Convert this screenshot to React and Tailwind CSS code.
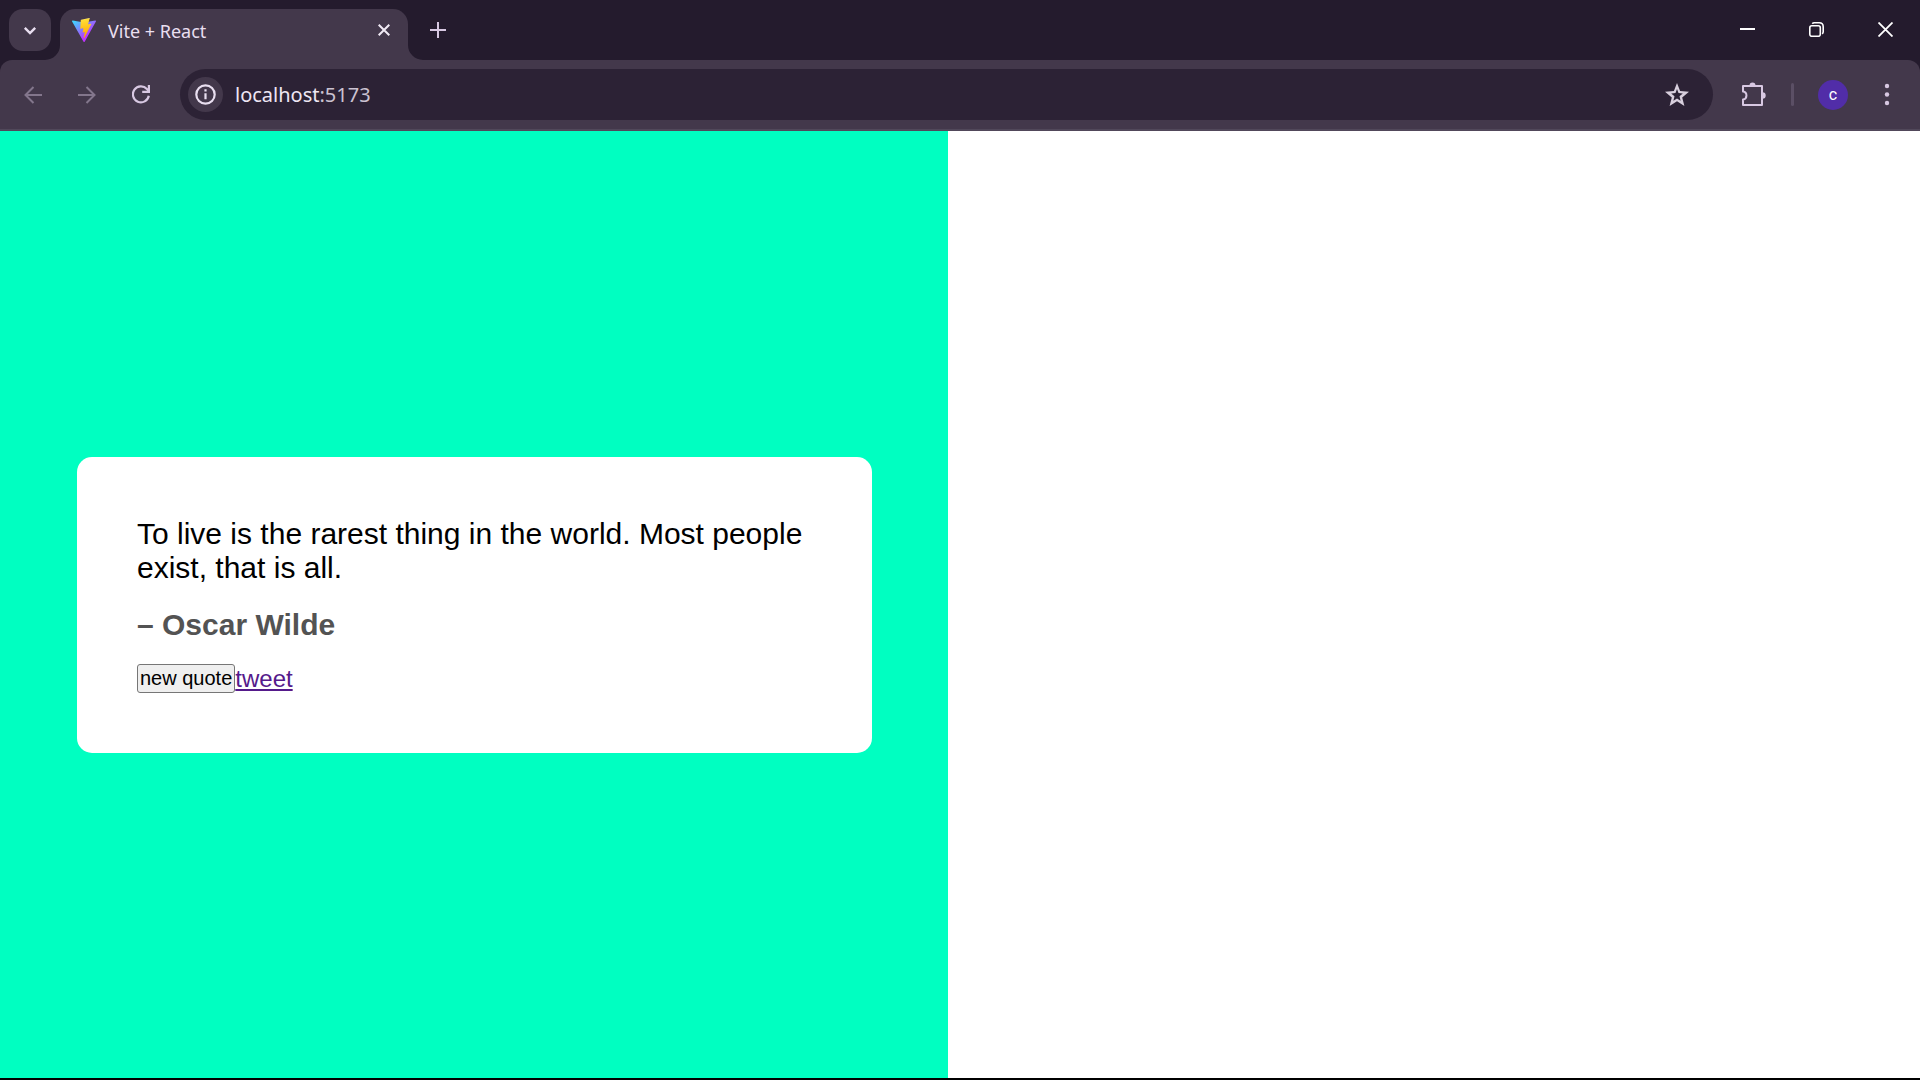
import React from "react";

function IconButton({ label, className = "", children }) {
  return (
    <button type="button" aria-label={label} className={`flex shrink-0 items-center justify-center ${className}`}>
      {children}
    </button>
  );
}

function ViteLogo() {
  return (
    <svg width="24" height="24" viewBox="0 0 32 32" aria-hidden="true" className="shrink-0">
      <defs>
        <linearGradient id="vite-body" x1="0%" x2="57.6%" y1="12%" y2="78%">
          <stop offset="0%" stopColor="#41D1FF" />
          <stop offset="100%" stopColor="#BD34FE" />
        </linearGradient>
        <linearGradient id="vite-bolt" x1="43%" x2="50%" y1="2%" y2="89%">
          <stop offset="0%" stopColor="#FFEA83" />
          <stop offset="8%" stopColor="#FFDD35" />
          <stop offset="100%" stopColor="#FFA800" />
        </linearGradient>
      </defs>
      <path fill="url(#vite-body)" d="M31.86 4.74 16.9 31.5a.86.86 0 0 1-1.5 0L.13 4.74a.86.86 0 0 1 .9-1.27L16 6.15l14.96-2.68a.86.86 0 0 1 .9 1.27Z" />
      <path fill="url(#vite-bolt)" d="M23.13.01 12.06 2.18a.4.4 0 0 0-.33.38l-.68 11.5a.4.4 0 0 0 .5.42l3.08-.71a.4.4 0 0 1 .49.48l-.92 4.49a.4.4 0 0 0 .52.47l1.9-.58a.4.4 0 0 1 .52.47l-1.46 7.04c-.09.44.5.68.74.3l.16-.25 9.03-18.02a.4.4 0 0 0-.44-.58l-3.17.61a.4.4 0 0 1-.46-.51L23.6.5a.4.4 0 0 0-.47-.49Z" />
    </svg>
  );
}

function TabStrip() {
  return (
    <div className="flex h-[60px] items-start text-white">
      <IconButton label="Search tabs" className="mt-[9px] ml-[9px] h-[42px] w-[42px] rounded-[14px] bg-[#43384b]">
        <svg width="14" height="14" viewBox="0 0 14 14" fill="none" stroke="#e9dff0" strokeWidth="2.4">
          <path d="M1.8 4.8 7 10l5.2-5.2" />
        </svg>
      </IconButton>

      <div className="relative mt-[9px] ml-[9px] flex h-[51px] w-[348px] items-start rounded-t-[15px] bg-[#43384b] pt-[9px] pl-3">
        <svg className="absolute bottom-0 -left-[15px]" width="15" height="15" viewBox="0 0 15 15" aria-hidden="true">
          <path fill="#43384b" d="M15 0v15H0A15 15 0 0 0 15 0Z" />
        </svg>
        <svg className="absolute -right-[15px] bottom-0" width="15" height="15" viewBox="0 0 15 15" aria-hidden="true">
          <path fill="#43384b" d="M0 0v15h15A15 15 0 0 1 0 0Z" />
        </svg>
        <ViteLogo />
        <span className="ml-3 flex-1 font-['Noto_Sans',sans-serif] text-[18px] leading-[27px] text-[#e9dff0]">Vite + React</span>
        <IconButton label="Close tab" className="mr-3 h-6 w-6">
          <svg width="12" height="12" viewBox="0 0 12 12" fill="none" stroke="#f1eaf5" strokeWidth="2">
            <path d="m.7.7 10.600 10.600M11.300.7.7 11.300" />
          </svg>
        </IconButton>
      </div>

      <IconButton label="New tab" className="mt-[9px] ml-[9px] h-[42px] w-[42px]">
        <svg width="16" height="16" viewBox="0 0 16 16" fill="none" stroke="#d8c8e2" strokeWidth="2">
          <path d="M8 0v16M0 8h16" />
        </svg>
      </IconButton>

      <div className="ml-auto flex">
        <IconButton label="Minimize" className="h-[59px] w-[69px]">
          <svg width="15" height="15" viewBox="0 0 15 15" fill="none" stroke="#fff" strokeWidth="2">
            <path d="M0 7h15" />
          </svg>
        </IconButton>
        <IconButton label="Restore" className="h-[59px] w-[69px]">
          <svg width="15" height="15" viewBox="0 0 15 15" fill="none" stroke="#fff" strokeWidth="1.6">
            <rect x=".8" y="3.800" width="10.500" height="10.500" rx="2" />
            <path d="M3.300 1.800C3.800 1.100 4.400.8 5.300.8h4.900c2.500 0 4 1.500 4 4v4.900c0 .9-.3 1.600-1 2.100" />
          </svg>
        </IconButton>
        <IconButton label="Close" className="h-[59px] w-[69px]">
          <svg width="15" height="15" viewBox="0 0 15 15" fill="none" stroke="#fff" strokeWidth="1.800">
            <path d="m.5.5 14 14M14.500.5l-14 14" />
          </svg>
        </IconButton>
      </div>
    </div>
  );
}

function Toolbar() {
  return (
    <div className="flex h-[71px] items-center rounded-t-xl border-b-2 border-[#51485a] bg-[#43384b] px-1.5">
      <IconButton label="Back" className="h-[42px] w-[54px]">
        <svg width="18" height="18" viewBox="0 0 18 18" fill="none" stroke="#83768c" strokeWidth="2">
          <path d="M18 9H1.500M9.500 1 1.500 9l8 8" />
        </svg>
      </IconButton>
      <IconButton label="Forward" className="h-[42px] w-[54px]">
        <svg width="18" height="18" viewBox="0 0 18 18" fill="none" stroke="#83768c" strokeWidth="2">
          <path d="M0 9h16.500M8.500 1l8 8-8 8" />
        </svg>
      </IconButton>
      <IconButton label="Reload" className="h-[42px] w-[54px]">
        <svg width="18" height="19" viewBox="0 0 18 19" fill="none" stroke="#d8c8e2" strokeWidth="2.2">
          <path d="M16.800 10.800A8 8 0 1 1 14.900 4L16.900 6.300" />
          <path d="M16.900 0v6.900H10.200" />
        </svg>
      </IconButton>

      <div className="ml-3 flex h-[51px] flex-1 items-center rounded-full bg-[#2c2235] pl-2">
        <IconButton label="View site information" className="h-[35px] w-[35px] rounded-full bg-[#43384b]">
          <svg width="21" height="21" viewBox="0 0 21 21" fill="none" stroke="#e9dff0" strokeWidth="2.2">
            <circle cx="10.500" cy="10.500" r="9.200" />
            <path d="M10.500 9.300v6M10.500 5.300v2.200" />
          </svg>
        </IconButton>
        <div className="ml-3 flex-1 font-['Noto_Sans',sans-serif] text-[20px] leading-7 text-[#eee6f3]">
          localhost<span className="text-[#cbc2d1]">:5173</span>
        </div>
        <IconButton label="Bookmark this tab" className="mr-[15px] h-[42px] w-[42px]">
          <svg width="24" height="24" viewBox="0 0 24 24" aria-hidden="true">
            <path
              fill="#d8cfdd"
              fillRule="evenodd"
              d="M12 0 15.100 8 24 8.700 17.200 14.400 19.400 23 12 18.300 4.600 23 6.800 14.400 0 8.700 8.900 8ZM12 6 10.500 10.100 6.200 10.500 9.500 13.300 8.400 17.700 12 15.400 15.600 17.700 14.500 13.300 17.800 10.500 13.500 10.100Z"
            />
          </svg>
        </IconButton>
      </div>

      <IconButton label="Extensions" className="ml-[13px] h-[42px] w-[54px]">
        <svg width="26" height="26" viewBox="-2 0 26 26" aria-hidden="true">
          <path
            fill="none"
            stroke="#d8c8e2"
            strokeWidth="2"
            strokeLinejoin="round"
            d="M1 4h19v19H1v-5.500c4.600-.6 4.600-7.400 0-8Z"
          />
          <path fill="#d8c8e2" d="M7.500 3.500a3 3 0 0 1 6 0ZM20.500 10.300a3.200 3.200 0 0 1 0 6.400Z" />
        </svg>
      </IconButton>
      <div className="mr-3 ml-[11px] h-[23px] w-[3px] rounded-full bg-[#5b4f65]" />
      <IconButton label="Profile" className="h-[42px] w-[54px]">
        <span className="flex h-[30px] w-[30px] items-center justify-center rounded-full bg-[#512da8] font-[Roboto,sans-serif] text-[16px] text-white">
          c
        </span>
      </IconButton>
      <IconButton label="Menu" className="h-[42px] w-[54px]">
        <svg width="6" height="23" viewBox="0 0 6 23" fill="#d8c8e2">
          <circle cx="3" cy="3" r="2.200" />
          <circle cx="3" cy="11.500" r="2.200" />
          <circle cx="3" cy="20" r="2.200" />
        </svg>
      </IconButton>
    </div>
  );
}

function QuoteBox() {
  return (
    <main className="grid flex-1 grid-cols-[79fr_81fr] bg-white font-['Liberation_Sans',Arial,sans-serif]">
      <div className="flex items-center bg-[#00ffc1] pr-[76px] pl-[77px]">
        <section className="w-full rounded-[15px] bg-white p-[60px]">
          <p className="text-[30px] leading-[34px] text-black">
            To live is the rarest thing in the world. Most people exist, that is all.
          </p>
          <h2 className="mt-[23px] text-[30px] leading-[34px] font-bold text-[#535353]">– Oscar Wilde</h2>
          <div className="mt-[22px] flex items-end text-[24px] leading-[29px]">
            <button
              type="button"
              className="rounded-[3px] border border-[#767676] bg-[#efefef] p-0.5 text-[20px] leading-[23px] text-black"
            >
              new quote
            </button>
            <a href="#tweet" className="text-[#551a8b] underline">
              tweet
            </a>
          </div>
        </section>
      </div>
    </main>
  );
}

export default function App() {
  return (
    <div className="flex min-h-screen flex-col border-b-2 border-black bg-[#241b2d]">
      <header>
        <TabStrip />
        <Toolbar />
      </header>
      <QuoteBox />
    </div>
  );
}
